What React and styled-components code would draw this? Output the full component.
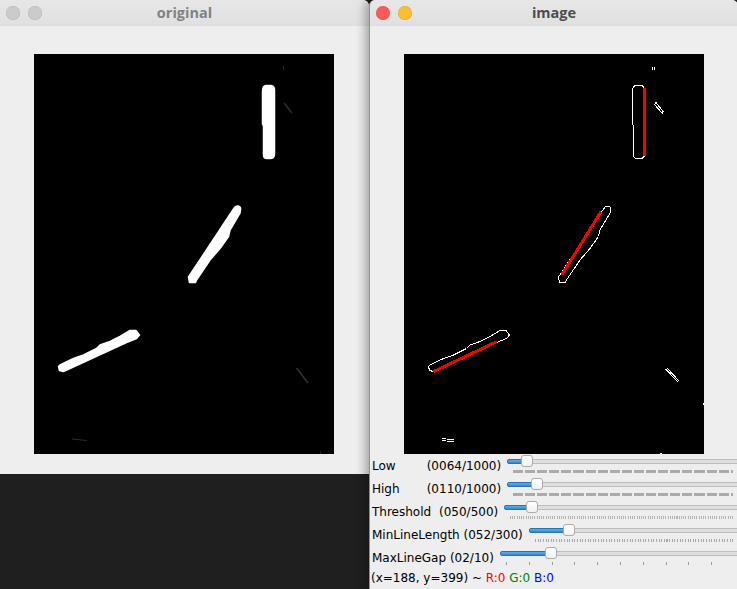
import React from 'react';
import styled, { createGlobalStyle, css } from 'styled-components';

const GlobalStyle = createGlobalStyle`
  html, body { margin: 0; padding: 0; background: #1f1f1f; overflow: hidden; }
  body { font-family: "DejaVu Sans", "Liberation Sans", sans-serif; }
`;

const Desktop = styled.div`
  width: 737px;
  height: 589px;
  display: flex;
  align-items: flex-start;
  background: #1f1f1f;
  overflow: hidden;
`;

const Window = styled.div`
  position: relative;
  flex: none;
  display: flex;
  flex-direction: column;
  width: ${(p) => p.$w}px;
  height: ${(p) => p.$h}px;
  background: #eeeeee;
  overflow: hidden;
  border-radius: ${(p) => (p.$active ? '6px 6px 0 0' : '0 6px 0 0')};
  ${(p) =>
    p.$active &&
    css`
      z-index: 1;
      border-left: 1px solid #8f8f8f;
      box-shadow: -4px 0 10px rgba(0, 0, 0, 0.3);
    `}
`;

const TitleBar = styled.div`
  flex: none;
  height: 26px;
  display: grid;
  grid-template-columns: 1fr auto 1fr;
  align-items: center;
  background: linear-gradient(#e7e7e7, #e0e0e0);
  padding: 0 6px;
`;

const Buttons = styled.div`
  display: flex;
  gap: 8px;
  align-items: center;
`;

const Dot = styled.span`
  width: 14px;
  height: 14px;
  border-radius: 50%;
  background: ${(p) => p.$c};
  box-shadow: inset 0 0 0 0.5px rgba(0, 0, 0, 0.12);
`;

const Title = styled.div`
  font-family: "Open Sans", "DejaVu Sans", sans-serif;
  font-weight: 700;
  font-size: 14.5px;
  line-height: 26px;
  color: ${(p) => (p.$active ? '#4d4d4d' : '#828282')};
`;

const Canvas = styled.div`
  flex: none;
  padding: 28px 0 0 34px;
  display: flex;
  svg { display: block; }
`;

const Bars = styled.div`
  display: flex;
  flex-direction: column;
`;

const Row = styled.div`
  height: 23px;
  display: flex;
  align-items: flex-start;
`;

const Label = styled.div`
  flex: none;
  padding-left: 2px;
  font-size: 12px;
  line-height: 24px;
  color: #000;
  white-space: pre;
`;

const Name = styled.span`
  display: inline-block;
  ${(p) => p.$w && css`width: ${p.$w}px;`}
`;

const Slider = styled.div`
  position: relative;
  flex: 1;
  height: 23px;
  margin-left: 6px;
  margin-right: -1px;
`;

const Groove = styled.div`
  position: absolute;
  top: 5px;
  left: 0;
  right: 0;
  height: 3px;
  border: 1px solid #bdbdbd;
  border-radius: 2px;
  background: #dedede;
`;

const Fill = styled.div`
  position: absolute;
  top: 5px;
  left: 0;
  height: 3px;
  border: 1px solid #2b72b3;
  border-radius: 2px;
  background: linear-gradient(#63aee9, #3187d2);
`;

const Handle = styled.div`
  position: absolute;
  top: 1px;
  width: 10px;
  height: 10px;
  border: 1px solid #ababab;
  border-radius: 3px;
  background: linear-gradient(#ffffff, #f1f1f1);
`;

const tickStyles = {
  dash: css`
    background: repeating-linear-gradient(90deg, #ababab 0 10px, transparent 10px 12.1px);
    height: 3px;
  `,
  fine: css`
    background: repeating-linear-gradient(90deg, #b3b3b3 0 1px, transparent 1px 2.22px);
    height: 3px;
  `,
  fine2: css`
    background: repeating-linear-gradient(90deg, #a8a8a8 0 1px, transparent 1px 2.63px);
    height: 3px;
  `,
  sparse: css`
    background: repeating-linear-gradient(90deg, #9c9c9c 0 1px, transparent 1px 10%);
    height: 3px;
    right: 5px;
  `,
};

const Ticks = styled.div`
  position: absolute;
  top: 16px;
  left: 6px;
  right: 6px;
  ${(p) => tickStyles[p.$kind]}
`;

const Status = styled.div`
  height: 20px;
  padding-left: 1px;
  font-size: 12px;
  line-height: 18px;
  color: #000;
  white-space: pre;
`;

const C = styled.span`
  color: ${(p) => p.$c};
`;

const bars = [
  { name: 'Low', w: 54.7, value: '0064', max: '1000', frac: 64 / 1000, ticks: 'dash' },
  { name: 'High', w: 54.7, value: '0110', max: '1000', frac: 110 / 1000, ticks: 'dash' },
  { name: 'Threshold', w: 67, value: '050', max: '500', frac: 50 / 500, ticks: 'fine' },
  { name: 'MinLineLength', value: '052', max: '300', frac: 52 / 300, ticks: 'fine2' },
  { name: 'MaxLineGap', value: '02', max: '10', frac: 2 / 10, ticks: 'sparse' },
];

const V_PATH =
  'M232,31.5 L237,31.5 Q240.5,32 240.5,36 L240.5,100 Q240.5,104.5 236,104.5 L233,104.5 Q229.5,104.5 229.5,101 L229.5,72 L228.5,70 L228.5,38 Q228.5,31.5 232,31.5 Z';
const M_PATH =
  'M199.5,155 Q201,152 204,152 Q207,152.5 206.5,156 L206,159 L196,176 L194.5,182.5 L186,194.5 L176,206 L162.5,226 L161.5,228.5 L155.5,228.5 L154.5,223 Z';
const L_PATH =
  'M24.5,312.5 L26,311 L39.5,304.5 L49.5,301 L62.5,294.5 L66,291 L76,287.5 L86,282.5 L96,276.5 L102,276.5 L105.5,281 L102.5,284.5 L92.5,288.5 L29.5,317.5 L25.5,316.5 Z';

function OriginalImage() {
  const blob = { fill: '#fff', stroke: '#fff', strokeWidth: 1.5, strokeLinejoin: 'round' };
  return (
    <svg width="300" height="400" viewBox="0 0 300 400">
      <rect width="300" height="400" fill="#000" />
      <path d={V_PATH} {...blob} />
      <path d={M_PATH} {...blob} />
      <path d={L_PATH} {...blob} />
      <line x1="250" y1="49" x2="258" y2="59" stroke="#2c2c2c" strokeWidth="1.5" />
      <line x1="262.5" y1="314" x2="274" y2="329" stroke="#323232" strokeWidth="1.5" />
      <line x1="37.7" y1="385" x2="52.7" y2="386.5" stroke="#2a2a2a" />
      <line x1="249" y1="12" x2="250" y2="16" stroke="#333" />
      <line x1="286" y1="397" x2="287" y2="400" stroke="#2a2a2a" />
    </svg>
  );
}

function EdgeImage() {
  const edge = { fill: 'none', stroke: '#fff', strokeWidth: 1, shapeRendering: 'crispEdges' };
  const red = { stroke: '#ff0000', strokeWidth: 3, shapeRendering: 'crispEdges' };
  return (
    <svg width="300" height="400" viewBox="0 0 300 400">
      <rect width="300" height="400" fill="#000" />
      <path d={V_PATH} {...edge} />
      <path d={M_PATH} {...edge} />
      <path d={L_PATH} {...edge} />
      <path d="M248.5,13 V16 M250.5,13 V16" {...edge} />
      <path d="M250.5,50.5 L252,48.5 L259,57.5 L258.5,59.5 Z" {...edge} />
      <path d="M262,315.5 L263.5,314.5 L274.5,326.5 L273.5,327.5 Z" {...edge} />
      <path d="M37.5,384.5 H41.5 M37.5,386.5 H41.5 M42.5,385.5 H50 M42.5,387.5 H50" {...edge} />
      <rect x="299" y="349" width="1" height="2" fill="#fff" />
      <rect x="256" y="399" width="2" height="1" fill="#fff" />
      <line x1="240.5" y1="33.7" x2="240.5" y2="102" {...red} />
      <line x1="197" y1="157.7" x2="157.7" y2="221" {...red} />
      <line x1="92.7" y1="287.7" x2="29.3" y2="317.7" {...red} />
    </svg>
  );
}

function Trackbar({ name, w, value, max, frac, ticks }) {
  return (
    <Row>
      <Label>
        <Name $w={w}>{w ? name : `${name} `}</Name>
        {`(${value}/${max})`}
      </Label>
      <Slider>
        <Groove />
        <Fill style={{ width: `calc((100% - 12px) * ${frac} + 4px)` }} />
        <Ticks $kind={ticks} />
        <Handle style={{ left: `calc((100% - 12px) * ${frac})` }} />
      </Slider>
    </Row>
  );
}

export default function App() {
  return (
    <>
      <GlobalStyle />
      <Desktop>
        <Window $w={369} $h={474}>
          <TitleBar>
            <Buttons>
              <Dot $c="#cbcbcb" />
              <Dot $c="#cbcbcb" />
            </Buttons>
            <Title>original</Title>
            <span />
          </TitleBar>
          <Canvas>
            <OriginalImage />
          </Canvas>
        </Window>
        <Window $w={368} $h={589} $active>
          <TitleBar>
            <Buttons>
              <Dot $c="#fc5a57" />
              <Dot $c="#fdbe2d" />
            </Buttons>
            <Title $active>image</Title>
            <span />
          </TitleBar>
          <Canvas>
            <EdgeImage />
          </Canvas>
          <Bars>
            {bars.map((b) => (
              <Trackbar key={b.name} {...b} />
            ))}
          </Bars>
          <Status>
            {'(x=188, y=399) ~ '}
            <C $c="#ff0000">R:0</C> <C $c="#008000">G:0</C> <C $c="#0000ff">B:0</C>
          </Status>
        </Window>
      </Desktop>
    </>
  );
}
